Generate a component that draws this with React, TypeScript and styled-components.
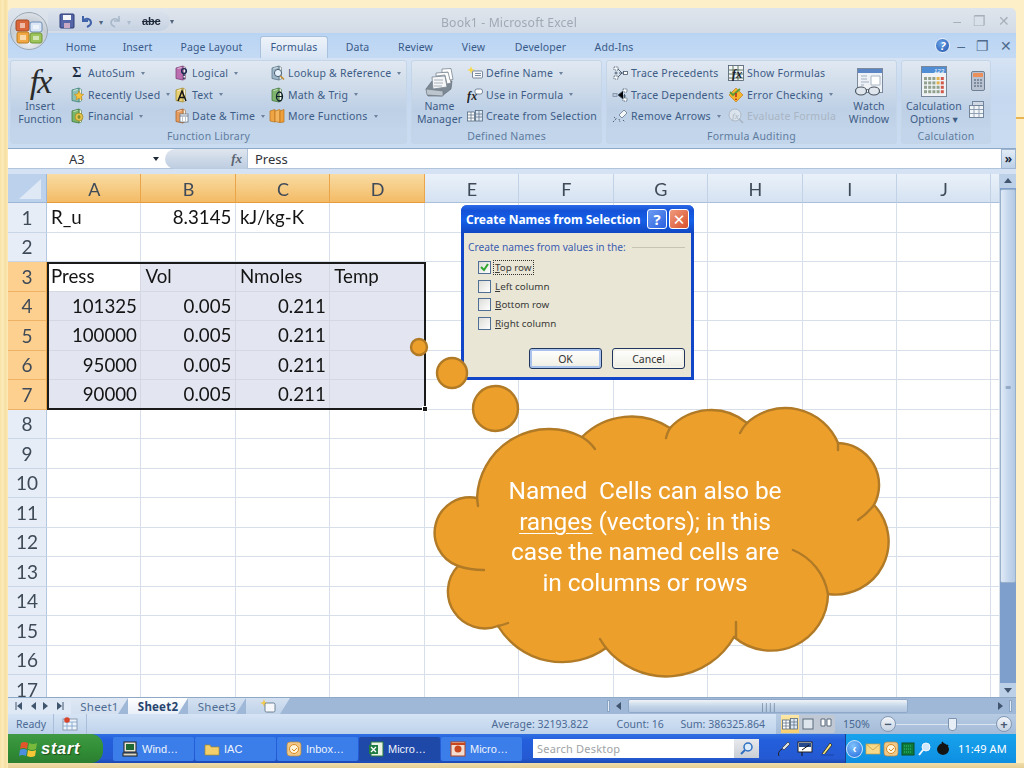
import React from "react";
import styled, { createGlobalStyle } from "styled-components";

const uiFont = `"Noto Sans", "DejaVu Sans", sans-serif`;
const cellFont = `Lato, "Open Sans", sans-serif`;

const GlobalStyle = createGlobalStyle`
  html, body { margin: 0; padding: 0; background: #fdf0c8; }
  * { box-sizing: border-box; }
`;

const Page = styled.div`
  position: relative;
  width: 1024px;
  height: 768px;
  overflow: hidden;
  padding: 8px 8px 5px 8px;
  background:
    linear-gradient(90deg, #f8e3a6 0, #fcecbd 3px, #f6dfa0 5px, #fbe9b8 8px, transparent 8px),
    linear-gradient(0deg, #e6cf94 0, #f0dcaa 5px, transparent 5px),
    linear-gradient(#e8b552, #e8b552) right 117px / 8px 2px no-repeat,
    #fdf0c8;
`;

const Window = styled.div`
  height: 755px;
  display: flex;
  flex-direction: column;
  font-family: ${uiFont};
  filter: blur(0.35px);
`;

/* title bar */
const TitleBar = styled.div`
  height: 25px;
  display: flex;
  align-items: center;
  position: relative;
  padding-left: 40px;
  border-radius: 5px 5px 0 0;
  background: linear-gradient(#dfe5ec, #d2dbe7);
`;
const Qat = styled.div`
  width: 122px;
  height: 20px;
  margin-top: 1px;
  display: flex;
  align-items: center;
  gap: 5px;
  padding-left: 11px;
  border-radius: 0 10px 10px 0;
  background: linear-gradient(#dbe2ec, #c6d2e2);
`;
const QatCaret = styled.span`
  font-size: 8px;
  color: ${(p: { $off?: boolean }) => (p.$off ? "#aebccd" : "#51647c")};
`;
const TitleText = styled.div`
  position: absolute;
  left: 0;
  right: 0;
  top: 6px;
  padding-right: 6px;
  text-align: center;
  font-size: 12.2px;
  letter-spacing: 0.15px;
  color: #a0a9b5;
`;
const WinControls = styled.div`
  margin-left: auto;
  display: flex;
  align-items: center;
  gap: 12px;
  padding-right: 6px;
`;

const Orb = styled.div`
  position: absolute;
  left: 2px;
  top: 4px;
  width: 38px;
  height: 38px;
  border-radius: 50%;
  z-index: 3;
  display: flex;
  align-items: center;
  justify-content: center;
  border: 1px solid #9aa6b3;
  background: radial-gradient(circle at 50% 75%, #f3f5f7 0, #c5ccd4 55%, #e9edf1 100%);
`;

/* tab row */
const TabRow = styled.div`
  height: 25px;
  display: flex;
  align-items: flex-end;
  padding-left: 42px;
  background: linear-gradient(#b9d4f3, #c4daf4);
`;
const RibbonTab = styled.div<{ $w: number; $active?: boolean }>`
  width: ${(p) => p.$w}px;
  height: ${(p) => (p.$active ? 22 : 25)}px;
  line-height: ${(p) => (p.$active ? 21 : 29)}px;
  text-align: center;
  font-size: 10.5px;
  letter-spacing: 0.1px;
  color: #395a88;
  ${(p) =>
    p.$active &&
    `
    background: linear-gradient(#eef3f9, #d7e4f4);
    border: 1px solid #a9c1dd;
    border-bottom: none;
    border-radius: 3px 3px 0 0;
  `}
`;
const HelpGroup = styled.div`
  margin-left: auto;
  height: 25px;
  display: flex;
  align-items: center;
  gap: 11px;
  padding-right: 4px;
`;

/* ribbon */
const Ribbon = styled.div`
  height: 91px;
  display: flex;
  gap: 4px;
  padding: 2px 0 0 2px;
  border-bottom: 1px solid #8ea8c8;
  background: linear-gradient(#d5e3f4 0, #c5d8ef 45%, #c9dcf1 100%);
`;
const Group = styled.div<{ $w: number }>`
  width: ${(p) => p.$w}px;
  height: 84px;
  display: flex;
  flex-direction: column;
  border-radius: 3px;
  border: 1px solid #c5d5e8;
  background: linear-gradient(#e0e8f2 0, #d0dcea 30%, #bdd0e6 60%, #c6d7eb 100%);
  overflow: hidden;
`;
const GroupBody = styled.div`
  height: 68px;
  display: flex;
`;
const GroupLabel = styled.div`
  height: 15px;
  line-height: 16px;
  text-align: center;
  font-size: 10.5px;
  letter-spacing: 0.2px;
  color: #5f7c9f;
  background: #c2d5eb;
`;
const Col = styled.div<{ $w: number; $pad?: number }>`
  width: ${(p) => p.$w}px;
  flex: none;
  display: flex;
  flex-direction: column;
  padding-top: 1.5px;
  padding-left: ${(p) => p.$pad ?? 0}px;
`;
const Item = styled.div<{ $off?: boolean }>`
  height: 21.5px;
  display: flex;
  align-items: center;
  gap: 3px;
  white-space: nowrap;
  font-size: 10.5px;
  letter-spacing: 0.22px;
  color: ${(p) => (p.$off ? "#a9b5c4" : "#3d5c86")};
`;
const Caret = styled.span`
  margin-left: 3px;
  width: 0;
  height: 0;
  border: 2.5px solid transparent;
  border-top: 3px solid #6d829d;
  border-bottom: none;
`;
const BigButton = styled.div<{ $w: number }>`
  width: ${(p) => p.$w}px;
  flex: none;
  display: flex;
  flex-direction: column;
  align-items: center;
`;
const BigIcon = styled.div`
  height: 39px;
  padding-top: 2px;
  display: flex;
  align-items: center;
  justify-content: center;
`;
const BigText = styled.div`
  text-align: center;
  font-size: 10.5px;
  line-height: 13px;
  letter-spacing: 0.1px;
  color: #3d5c86;
  white-space: nowrap;
`;
const FxMark = styled.span`
  font-family: "Liberation Serif", serif;
  font-style: italic;
  font-weight: 400;
  font-size: 34px;
  line-height: 34px;
  letter-spacing: -2px;
  color: #2b2b2b;
`;
const SigmaMark = styled.span`
  width: 16px;
  text-align: center;
  font-family: "Liberation Serif", serif;
  font-weight: 700;
  font-size: 14px;
  color: #1c2c44;
`;
const Divider = styled.div`
  width: 1px;
  height: 54px;
  margin: 6px 0 0 0;
  background: #a9bdd6;
`;
const SmallIcons = styled.div`
  flex: 1;
  display: flex;
  flex-direction: column;
  align-items: center;
  gap: 10px;
  padding: 10px 0 0 0;
`;

/* formula bar */
const FormulaRow = styled.div`
  height: 25px;
  padding-bottom: 5px;
  background: #d4e2f3;
`;
const FormulaBar = styled.div`
  height: 20px;
  display: flex;
  align-items: center;
  background: #fff;
  border-bottom: 1px solid #b0c4dc;
`;
const NameBox = styled.div`
  width: 157px;
  display: flex;
  align-items: center;
  justify-content: space-between;
  padding: 1px 6px 0 61px;
  font-size: 13px;
  color: #30343a;
`;
const NameCaret = styled.span`
  width: 0;
  height: 0;
  border: 3.5px solid transparent;
  border-top: 4px solid #1f2a38;
  border-bottom: none;
`;
const FxButton = styled.div`
  width: 83px;
  height: 20px;
  display: flex;
  align-items: center;
  justify-content: flex-end;
  padding-right: 5px;
  border-radius: 10px 0 0 10px;
  border-right: 1px solid #b0c4dc;
  background: linear-gradient(#dfe6ef, #bccce0);
  font-family: "Liberation Serif", serif;
  font-style: italic;
  font-weight: 700;
  font-size: 13px;
  color: #5b6370;
`;
const FormulaText = styled.div`
  flex: 1;
  padding: 1px 0 0 7px;
  font-size: 13px;
  color: #30343a;
`;
const ExpandButton = styled.div`
  width: 15px;
  height: 20px;
  text-align: center;
  line-height: 17px;
  font-size: 12px;
  font-weight: 700;
  color: #1d2a3c;
  border: 1px solid #9fb6d3;
  background: linear-gradient(#e3ecf6, #bcd0e8);
`;

/* sheet */
const SheetArea = styled.div`
  height: 523px;
  display: flex;
`;
const Grid = styled.div`
  position: relative;
  flex: 1;
  overflow: hidden;
  display: grid;
  grid-template-columns: 39px repeat(10, 94.45px) 1fr;
  grid-auto-rows: 29.5px;
  grid-template-rows: 29px;
  background: #fff;
  font-family: ${cellFont};
`;
const Corner = styled.div`
  position: relative;
  background: #bcd1ec;
  border-right: 1px solid #9db6d6;
  border-bottom: 1px solid #9db6d6;
  &::after {
    content: "";
    position: absolute;
    left: 11px;
    top: 5px;
    width: 22px;
    height: 20px;
    background: #dfe9f5;
    clip-path: polygon(100% 0, 100% 100%, 0 100%);
  }
`;
const ColHead = styled.div<{ $sel?: boolean }>`
  display: flex;
  align-items: center;
  justify-content: center;
  padding: 2px 0 0 1px;
  font-size: 18px;
  color: #3f4a58;
  border-right: 1px solid ${(p) => (p.$sel ? "#eaa54a" : "#c1d2e6")};
  border-bottom: 1px solid ${(p) => (p.$sel ? "#e79a3c" : "#a9bfda")};
  background: ${(p) =>
    p.$sel ? "linear-gradient(#f9dca3, #f3bb66)" : "linear-gradient(#eaf1f9, #d5e2f2)"};
`;
const RowHead = styled.div<{ $sel?: boolean }>`
  display: flex;
  align-items: center;
  justify-content: center;
  font-size: 19px;
  color: #3f4a58;
  border-right: 1px solid ${(p) => (p.$sel ? "#eaa54a" : "#b5c8df")};
  border-bottom: 1px solid ${(p) => (p.$sel ? "#eeb266" : "#c8d6e8")};
  background: ${(p) => (p.$sel ? "#fdd08f" : "#e6edf6")};
`;
const Cell = styled.div<{ $right?: boolean; $sel?: boolean; $active?: boolean }>`
  display: flex;
  align-items: center;
  justify-content: ${(p) => (p.$right ? "flex-end" : "flex-start")};
  padding: 0 3.5px 0 4px;
  font-size: 18.7px;
  color: #141414;
  white-space: nowrap;
  border-right: 1px solid ${(p) => (p.$sel ? "#d4d8e3" : "#d7dfeb")};
  border-bottom: 1px solid ${(p) => (p.$sel ? "#d4d8e3" : "#d7dfeb")};
  background: ${(p) => (p.$active ? "#fff" : p.$sel ? "#e3e6f1" : "#fff")};
`;
const Selection = styled.div`
  position: absolute;
  left: 39px;
  top: 87.5px;
  width: 378.5px;
  height: 148.5px;
  border: 2px solid #1a1a1a;
  pointer-events: none;
`;
const Handle = styled.span`
  position: absolute;
  right: -4px;
  bottom: -4px;
  width: 6px;
  height: 6px;
  background: #1a1a1a;
  border: 1px solid #fff;
`;
const VScroll = styled.div`
  width: 16px;
  display: flex;
  flex-direction: column;
  background: #7e9fcb;
`;
const ScrollArrow = styled.div`
  height: 14px;
  flex: none;
  display: flex;
  align-items: center;
  justify-content: center;
  background: #bcd0e8;
`;
const VThumb = styled.div`
  height: 394px;
  margin-top: 1px;
  display: flex;
  align-items: center;
  justify-content: center;
  color: #6a84a6;
  font-size: 8px;
  line-height: 3px;
  border: 1px solid #99b0cd;
  border-radius: 2px;
  background: linear-gradient(90deg, #e0eaf6, #c4d6ec 55%, #b4c9e3);
`;
const VRest = styled.div`
  flex: 1;
`;

/* sheet tabs */
const TabBar = styled.div`
  height: 17px;
  display: flex;
  align-items: stretch;
  background: #9fb8d7;
  border-top: 1px solid #8ea8c8;
`;
const NavArrows = styled.div`
  width: 63px;
  display: flex;
  align-items: center;
  justify-content: space-around;
  padding: 0 4px;
  background: #dfe9f5;
`;
const SheetTab = styled.div<{ $w: number; $active?: boolean; $light?: boolean }>`
  width: ${(p) => p.$w}px;
  display: flex;
  align-items: center;
  justify-content: center;
  font-size: 11.5px;
  font-weight: ${(p) => (p.$active ? 700 : 400)};
  letter-spacing: 0.2px;
  color: ${(p) => (p.$active ? "#27436e" : "#4f6c92")};
  clip-path: polygon(0 0, 100% 0, calc(100% - 10px) 100%, 0 100%);
  background: ${(p) =>
    p.$active
      ? "linear-gradient(#fff, #e8eff8)"
      : p.$light
        ? "linear-gradient(#dfe8f4, #d3e0f0)"
        : "linear-gradient(#d4e1f1, #c0d3e9)"};
`;
const TabFill = styled.div`
  flex: 1;
`;
const HScrollBox = styled.div`
  width: 411px;
  display: flex;
  align-items: center;
  gap: 4px;
  padding: 0 4px 0 2px;
`;
const HThumb = styled.div`
  width: 280px;
  height: 14px;
  margin-left: 2px;
  display: flex;
  align-items: center;
  justify-content: center;
  font-size: 8px;
  color: #5f7896;
  letter-spacing: -0.5px;
  border: 1px solid #90a9c8;
  border-radius: 2px;
  background: linear-gradient(#f0f4f9, #c5d5e8 50%, #b0c5de);
`;
const Splitter = styled.div`
  width: 3px;
  height: 12px;
  background: #e3ecf6;
  border: 1px solid #8aa4c4;
`;
const HFill = styled.div`
  flex: 1;
`;

/* status bar */
const StatusBar = styled.div`
  height: 20px;
  display: flex;
  align-items: center;
  font-size: 10.5px;
  color: #4b6a95;
  background: linear-gradient(#d6e4f5, #bdd2eb);
`;
const StatusCell = styled.div<{ $w: number }>`
  width: ${(p) => p.$w}px;
  height: 20px;
  flex: none;
  display: flex;
  align-items: center;
  padding-left: 8px;
  border-right: 1px solid #a9bed8;
`;
const StatusStats = styled.div`
  flex: 1;
  display: flex;
  justify-content: flex-end;
  padding-right: 11px;
  white-space: nowrap;
`;
const StatValue = styled.span<{ $w: number }>`
  display: inline-block;
  width: ${(p) => p.$w}px;
`;
const StatusRight = styled.div`
  width: 240px;
  height: 20px;
  flex: none;
  display: flex;
  align-items: center;
  padding-left: 5px;
  background: linear-gradient(#b7cbe3, #a4bbd8);
`;
const ViewButtons = styled.div`
  display: flex;
  width: 54px;
  height: 18px;
  border-radius: 2px;
  background: #bfc8d3;
`;
const ViewButton = styled.div<{ $on?: boolean }>`
  flex: 1;
  display: flex;
  align-items: center;
  justify-content: center;
  background: ${(p) => (p.$on ? "linear-gradient(#fde8a8, #f9cf6d)" : "none")};
`;
const ZoomText = styled.div`
  width: 37px;
  margin-left: 8px;
  color: #486891;
`;
const ZoomBtn = styled.div`
  width: 16px;
  height: 16px;
  flex: none;
  display: flex;
  align-items: center;
  justify-content: center;
  border-radius: 50%;
  border: 1px solid #8298b4;
  background: linear-gradient(#f3f6fa, #c5d2e2);
  font-size: 13px;
  line-height: 13px;
  font-weight: 700;
  color: #4a5c72;
`;
const ZoomTrack = styled.div`
  width: 100px;
  height: 1px;
  position: relative;
  background: #dbe5f1;
`;
const ZoomThumb = styled.span`
  position: absolute;
  left: 52px;
  top: -6px;
  width: 9px;
  height: 13px;
  background: #e8eef6;
  border: 1px solid #7c93b0;
  border-radius: 1px 1px 4px 4px;
`;

/* taskbar */
const Taskbar = styled.div`
  height: 29px;
  display: flex;
  align-items: center;
  color: #fff;
  font-family: "Liberation Sans", sans-serif;
  background: linear-gradient(#2f6fe2 0, #245fdc 20%, #2459d2 85%, #1c48b0 100%);
`;
const StartButton = styled.div`
  width: 95px;
  height: 29px;
  flex: none;
  display: flex;
  align-items: center;
  gap: 2px;
  padding-left: 11px;
  border-radius: 0 12px 12px 0;
  background: linear-gradient(#3f9a43 0, #328f37 50%, #2b7e30 100%);
`;
const StartText = styled.span`
  font-size: 16.5px;
  font-weight: 700;
  font-style: italic;
  letter-spacing: 0.7px;
  text-shadow: 1px 1px 1px #1c4d1e;
`;
const TaskButtons = styled.div`
  margin-left: 10px;
  display: flex;
  gap: 1px;
`;
const TaskButton = styled.div<{ $active?: boolean }>`
  width: 81px;
  height: 24px;
  flex: none;
  display: flex;
  align-items: center;
  gap: 4px;
  padding-left: 9px;
  font-size: 11px;
  letter-spacing: 0;
  color: #eef3fb;
  border-radius: 2px;
  background: ${(p) => (p.$active ? "#1f49a8" : "#3b7ee9")};
`;
const SearchBox = styled.div`
  width: 201px;
  height: 19px;
  margin-left: 11px;
  flex: none;
  padding: 2px 0 0 4px;
  font-family: ${uiFont};
  font-size: 11px;
  letter-spacing: 0.2px;
  color: #a0a3a6;
  background: #fff;
`;
const SearchGo = styled.div`
  width: 25px;
  height: 19px;
  flex: none;
  display: flex;
  align-items: center;
  justify-content: center;
  background: linear-gradient(#e9eaec, #c9ced6);
`;
const QuickIcons = styled.div`
  margin-left: 16px;
  display: flex;
  align-items: center;
  gap: 6px;
`;
const Tray = styled.div`
  height: 29px;
  margin-left: auto;
  width: 171px;
  flex: none;
  display: flex;
  align-items: center;
  gap: 2px;
  border-left: 1px solid #17408f;
  background: linear-gradient(#18a2ec, #0e8fe2);
`;
const Clock = styled.span`
  margin-left: 5px;
  font-family: ${uiFont};
  font-size: 11px;
  letter-spacing: 0.1px;
  white-space: nowrap;
`;
const TrayBack = styled.div`
  width: 17px;
  height: 18px;
  flex: none;
  border-radius: 50%;
  display: flex;
  align-items: center;
  justify-content: center;
  font-size: 12px;
  font-weight: 700;
  background: radial-gradient(circle at 40% 30%, #7fc3fb, #2369dd);
  border: 1px solid #cfe4fb;
`;

/* dialog */
const Dialog = styled.div`
  position: absolute;
  left: 461px;
  top: 205px;
  width: 233px;
  height: 175px;
  display: flex;
  flex-direction: column;
  border-radius: 6px 6px 0 0;
  border: 3px solid #1146c9;
  border-top: none;
  background: #e9e6d6;
  font-family: ${uiFont};
  z-index: 4;
`;
const DialogTitle = styled.div`
  height: 28px;
  margin: 0 -3px;
  flex: none;
  display: flex;
  align-items: center;
  gap: 2px;
  padding: 0 5px 0 5px;
  border-radius: 6px 6px 0 0;
  color: #fff;
  font-weight: 700;
  font-size: 12px;
  white-space: nowrap;
  background: linear-gradient(#2b6ae8 0, #1452d8 20%, #1560e8 55%, #0f47c3 100%);
`;
const TitleLabel = styled.span`
  flex: 1;
`;
const TitleButton = styled.div<{ $close?: boolean }>`
  width: 20px;
  height: 20px;
  flex: none;
  display: flex;
  align-items: center;
  justify-content: center;
  font-size: 15px;
  font-weight: 700;
  border-radius: 3px;
  border: 1px solid #fff;
  background: ${(p) =>
    p.$close
      ? "linear-gradient(135deg, #f09a7d, #d8512d)"
      : "linear-gradient(135deg, #6d9cf2, #2a5fe0)"};
`;
const DialogBody = styled.div`
  flex: 1;
  display: flex;
  flex-direction: column;
  padding: 7px 6px 8px 4px;
`;
const FrameTitle = styled.div`
  display: flex;
  align-items: center;
  gap: 6px;
  font-size: 10.2px;
  color: #3c5caf;
  white-space: nowrap;
`;
const FrameLine = styled.span`
  flex: 1;
  height: 1px;
  background: #c7c5b2;
`;
const Options = styled.div`
  margin: 7px 0 0 10px;
  display: flex;
  flex-direction: column;
  gap: 5.6px;
`;
const Option = styled.div`
  height: 13px;
  display: flex;
  align-items: center;
  gap: 2px;
  font-size: 9.8px;
  color: #3a3a38;
`;
const Check = styled.span`
  width: 13px;
  height: 13px;
  flex: none;
  display: flex;
  align-items: center;
  justify-content: center;
  background: linear-gradient(135deg, #dcdcd7, #fff);
  border: 1px solid #4f6f94;
`;
const OptionLabel = styled.span<{ $focus?: boolean }>`
  padding: 0 1px;
  border: 1px dotted ${(p) => (p.$focus ? "#333" : "transparent")};
`;
const DialogButtons = styled.div`
  margin-top: auto;
  display: flex;
  justify-content: flex-end;
  gap: 10px;
`;
const DialogButton = styled.div<{ $def?: boolean }>`
  width: 73px;
  height: 21px;
  display: flex;
  align-items: center;
  justify-content: center;
  font-size: 10.5px;
  color: #333;
  border-radius: 3px;
  border: 1px solid #20365f;
  background: linear-gradient(#fff, #f2f1e8 85%, #dcd8c6);
  box-shadow: inset 0 0 0 2px ${(p) => (p.$def ? "#a9c3ec" : "#f4f3ea")};
`;

/* callout */
const CalloutArt = styled.svg`
  position: absolute;
  left: 0;
  top: 0;
  z-index: 5;
`;
const CalloutText = styled.div`
  position: absolute;
  left: 445px;
  top: 476px;
  width: 400px;
  z-index: 6;
  text-align: center;
  font-family: Roboto, "Liberation Sans", sans-serif;
  font-size: 24.5px;
  line-height: 30.7px;
  letter-spacing: -0.1px;
  color: #fff;
  white-space: pre;
`;
const Under = styled.span`
  text-decoration: underline;
  text-decoration-thickness: 1px;
  text-underline-offset: 3px;
`;

/* icons */
const Svg = ({ s = 16, w, h, children }: { s?: number; w?: number; h?: number; children: React.ReactNode }) => (
  <svg width={w ?? s} height={h ?? s} viewBox={`0 0 ${w ?? s} ${h ?? s}`} style={{ flex: "none" }}>
    {children}
  </svg>
);

const Book = ({ c, d, children }: { c: string; d: string; children?: React.ReactNode }) => (
  <Svg>
    <path d="M10 1l2.5 1.5V14L10 15z" fill="#f3f3ea" stroke={d} strokeWidth=".6" />
    <path d="M3 3l7-2v14l-7-1.5z" fill={c} stroke={d} strokeWidth=".8" />
    <path d="M4.5 3.5l4-1" stroke="#fff" strokeOpacity=".6" />
    {children}
  </Svg>
);

const ICONS: Record<string, React.ReactNode> = {
  recent: (
    <Book c="#8cc0b2" d="#3f7f72">
      <path d="M10 4l1.5 3 3.3.4-2.4 2.2.7 3.3-3.1-1.7-2.9 1.7.6-3.3L5.3 7.4 8.6 7z" fill="#f6c33a" stroke="#b97f14" strokeWidth=".5" />
    </Book>
  ),
  financial: (
    <Book c="#79b56b" d="#40783a">
      <circle cx="10" cy="9" r="4" fill="#e2c24a" stroke="#8d7a1d" strokeWidth=".6" />
      <path d="M8.500 9h3M10 7v4" stroke="#5f7d22" />
    </Book>
  ),
  logical: (
    <Book c="#bb6fb0" d="#7c3f77">
      <circle cx="11" cy="6" r="2.400" fill="none" stroke="#1b2a52" strokeWidth="1.400" />
      <path d="M11 8.500v2.500M11 12.500v1.500" stroke="#1b2a52" strokeWidth="1.500" />
    </Book>
  ),
  text: (
    <Book c="#e8d176" d="#a88e2a">
      <path d="M5 14l4-10 4 10M6.500 10.500h5" fill="none" stroke="#151515" strokeWidth="1.500" />
    </Book>
  ),
  date: (
    <Book c="#e79b5c" d="#a9642d">
      <rect x="7" y="6" width="8" height="8" fill="#fff" stroke="#5a6b80" strokeWidth=".7" />
      <path d="M7 8h8M9 10h1M12 10h1M9 12h1M12 12h1" stroke="#5a6b80" strokeWidth=".8" />
    </Book>
  ),
  lookup: (
    <Book c="#9fb7c8" d="#5b7688">
      <circle cx="9" cy="8" r="3.600" fill="#e5f2fb" stroke="#4b5d70" />
      <path d="M11.500 11l3.500 3.500" stroke="#c68a2b" strokeWidth="1.600" />
    </Book>
  ),
  math: (
    <Book c="#7fb46f" d="#44793a">
      <ellipse cx="10.500" cy="9.500" rx="3" ry="4.500" fill="none" stroke="#12202e" strokeWidth="1.300" />
      <path d="M8 9.500h5" stroke="#12202e" />
    </Book>
  ),
  more: (
    <Svg>
      <path d="M1 3l5-1.500V14l-5-1z" fill="#f0a545" stroke="#b8711a" strokeWidth=".7" />
      <path d="M6 3l5-1.500V14.500l-5-1z" fill="#f3b45c" stroke="#b8711a" strokeWidth=".7" />
      <path d="M11 3l4-1.500V14l-4 .5z" fill="#efa03a" stroke="#b8711a" strokeWidth=".7" />
    </Svg>
  ),
  define: (
    <Svg>
      <path d="M4 1l1 3 3 1-3 1-1 3-1-3-3-1 3-1z" fill="#f4d84a" />
      <rect x="5.500" y="6" width="10" height="7" rx="1" fill="#f5f7fa" stroke="#5c7085" strokeWidth=".8" />
      <path d="M8 8.500h6M8 10.500h6" stroke="#5c7085" strokeWidth=".8" />
    </Svg>
  ),
  use: (
    <Svg>
      <text x="0" y="13" fontFamily="Liberation Serif" fontStyle="italic" fontWeight="700" fontSize="12" fill="#222">fx</text>
      <rect x="8" y="2" width="7.500" height="5" rx="2" fill="#fff" stroke="#5c7085" strokeWidth=".8" />
    </Svg>
  ),
  create: (
    <Svg>
      <rect x=".5" y="4" width="7" height="9" fill="#fff" stroke="#53697f" strokeWidth=".8" />
      <rect x="8.500" y="2.500" width="7" height="10.500" fill="#dfe9f3" stroke="#53697f" strokeWidth=".8" />
      <path d="M1 7h6M1 10h6M9 6h6M9 9h6M12 3v10M4 4v9" stroke="#53697f" strokeWidth=".7" />
    </Svg>
  ),
  precedents: (
    <Svg>
      <path d="M2 2h4v3H2zM2 11h4v3H2z" fill="#fff" stroke="#44566a" strokeWidth=".8" strokeDasharray="1.400 .8" />
      <path d="M6 4l4 4M6 12l4-4M7 8h5M4 6.500v3M2.500 8h3" stroke="#44566a" strokeWidth=".9" />
      <rect x="11.500" y="6.500" width="4" height="3" fill="#fff" stroke="#44566a" strokeWidth=".8" />
    </Svg>
  ),
  dependents: (
    <Svg>
      <path d="M11 2h4v3h-4zM11 11h4v3h-4z" fill="#fff" stroke="#44566a" strokeWidth=".8" strokeDasharray="1.400 .8" />
      <path d="M11 4L6 8l5 4M12.500 7v4M11 9h3" stroke="#44566a" strokeWidth=".9" />
      <rect x="1" y="6.500" width="4" height="3" fill="#bccadb" stroke="#7a8ea4" strokeWidth=".8" />
    </Svg>
  ),
  remove: (
    <Svg>
      <path d="M7 7l5-5 3 3-5 5z" fill="#f5f6f8" stroke="#65788e" strokeWidth=".8" />
      <path d="M1 14l4-4M7 11l1 3M2 9l2 2M11 12l2 2" stroke="#44566a" strokeWidth=".9" strokeDasharray="1.500 1" />
    </Svg>
  ),
  show: (
    <Svg>
      <rect x=".5" y=".5" width="15" height="15" fill="#f3f5f6" stroke="#4a5a6a" strokeWidth=".8" />
      <path d="M1 5h14M1 9h14M1 13h14M5 1v14M10 1v14" stroke="#4f6a50" strokeWidth=".9" />
      <text x="4" y="13" fontFamily="Liberation Serif" fontStyle="italic" fontWeight="700" fontSize="12" fill="#16202c">fx</text>
    </Svg>
  ),
  error: (
    <Svg>
      <path d="M8 1l7 7-7 7-7-7z" fill="#f5b52d" stroke="#c5801a" strokeWidth=".7" />
      <path d="M2 5l3 3 7-6" fill="none" stroke="#5a9a3a" strokeWidth="1.800" />
      <path d="M8 6v4M8 11.500v1.500" stroke="#c22e1c" strokeWidth="1.600" />
    </Svg>
  ),
  evaluate: (
    <Svg>
      <circle cx="7" cy="7" r="6" fill="#dbe3ec" stroke="#a9b5c3" strokeWidth=".9" />
      <path d="M11 11l4 4" stroke="#a9b5c3" strokeWidth="1.600" />
      <text x="4" y="10.500" fontFamily="Liberation Serif" fontStyle="italic" fontSize="9" fill="#a9b5c3">fx</text>
    </Svg>
  ),
  macro: (
    <Svg>
      <rect x="1" y="3" width="14" height="11" fill="#eef3f9" stroke="#7a8da3" strokeWidth=".8" />
      <path d="M1 6h14M5 6v8M10 6v8M1 10h14" stroke="#7aa0cc" strokeWidth=".8" />
      <circle cx="5" cy="4" r="2.800" fill="#d8442a" />
    </Svg>
  ),
  newTab: (
    <Svg>
      <path d="M4 1l1 3 3 1-3 1-1 3-1-3-3-1 3-1z" fill="#f4c84a" />
      <rect x="5" y="5" width="10" height="9" rx="1.500" fill="#f5f7fa" stroke="#53697f" strokeWidth=".8" />
    </Svg>
  ),
};

const Ic = ({ n }: { n: string }) => <>{ICONS[n]}</>;

const NameManagerIcon = () => (
  <Svg w={32} h={30}>
    <path d="M2 22l6-8h20l-1 8-9 7H4z" fill="#7d8a96" stroke="#59636e" strokeWidth=".6" />
    <path d="M2 22l17 2v5L3 28z" fill="#bcc5ce" stroke="#6b7680" strokeWidth=".6" />
    <path d="M8 10l13-1 2 11-14 2z" fill="#f5f6f8" stroke="#7b8691" strokeWidth=".8" />
    <path d="M12 6l13-1 2 11-4 1-2-9-9 1z" fill="#fdfdfd" stroke="#7b8691" strokeWidth=".8" />
    <path d="M18 2l9-.5 2 11-3 .5-2-8-6 .5z" fill="#fff" stroke="#7b8691" strokeWidth=".8" />
    <path d="M10 13h9M10 16h9M10 19h8" stroke="#94a0ab" strokeWidth=".8" />
  </Svg>
);

const WatchIcon = () => (
  <Svg w={30} h={30}>
    <rect x="3.500" y="1.500" width="25" height="24" fill="#eef2f7" stroke="#7b8b9d" />
    <rect x="4" y="2" width="24" height="4" fill="#5b85c4" />
    <path d="M7 9h6M7 12h6M7 15h8M7 18h3" stroke="#9faebf" />
    <path d="M17 9h9v9h-9z" fill="#fff" stroke="#a8b4c2" />
    <ellipse cx="7" cy="24" rx="5.500" ry="4" fill="#dfe6ee" stroke="#4c5560" strokeWidth="1.200" />
    <ellipse cx="20" cy="24" rx="5.500" ry="4" fill="#dfe6ee" stroke="#4c5560" strokeWidth="1.200" />
    <path d="M12 23q1.500-1 3 0" fill="none" stroke="#4c5560" />
  </Svg>
);

const CalcKeys = [0, 1, 2, 3].flatMap((r) => [0, 1, 2, 3, 4].map((c) => ({ r, c })));
const CalcIcon = () => (
  <Svg w={26} h={31}>
    <rect x=".5" y=".5" width="25" height="30" fill="#f0f3f6" stroke="#788899" />
    <rect x="1" y="1" width="24" height="6" fill="#4f8ed4" />
    <text x="13" y="6.500" fontFamily="Liberation Sans" fontStyle="italic" fontSize="6" fill="#fff">123</text>
    {CalcKeys.map(({ r, c }) => (
      <rect
        key={`${r}-${c}`}
        x={3 + c * 4.2}
        y={11 + r * 4.4}
        width="3"
        height="3"
        fill={c === 4 ? "#d1584a" : c === 3 && r < 2 ? "#e2b34b" : "#92a28f"}
      />
    ))}
  </Svg>
);
const MiniCalc = () => (
  <Svg w={14} h={20}>
    <rect x=".5" y=".5" width="13" height="19" rx="1.500" fill="#b8c2d0" stroke="#6f7f94" />
    <rect x="2" y="2" width="10" height="4" fill="#eb8f5c" />
    <path d="M3 9h2M6 9h2M9 9h2M3 12h2M6 12h2M9 12h2M3 15h2M6 15h2M9 15h2" stroke="#46566b" />
  </Svg>
);
const MiniSheet = () => (
  <Svg w={18} h={18}>
    <rect x="3.500" y=".5" width="11" height="12" fill="#cfd8e4" stroke="#72859b" />
    <rect x=".5" y="4.500" width="14" height="12" fill="#f2f5f8" stroke="#72859b" />
    <path d="M1 8.500h13M1 12.500h13M5 5v11M10 5v11" stroke="#8fa0b4" />
  </Svg>
);

const OrbMark = () => (
  <Svg s={28}>
    <rect x="1" y="3" width="13" height="11" rx="2" fill="#d9663a" stroke="#a44a25" />
    <rect x="15" y="5" width="12" height="10" rx="2" fill="#dbe7f6" stroke="#6d8db8" />
    <rect x="2" y="15" width="12" height="11" rx="2" fill="#f1a844" stroke="#bb7a1f" />
    <rect x="15" y="16" width="12" height="10" rx="2" fill="#9dc35b" stroke="#6f9637" />
    <path d="M5 6h5v5H5zM18 8h6v4h-6zM5 18h6v5H5zM18 19h6v4h-6z" fill="#fff" fillOpacity=".55" />
  </Svg>
);

const SaveIcon = () => (
  <Svg>
    <rect x="1" y="1" width="14" height="14" rx="1" fill="#5566a8" stroke="#2e3c76" />
    <rect x="4" y="2" width="8" height="5" fill="#f4f6fa" />
    <rect x="5" y="10" width="6" height="5" fill="#c9a8c4" />
  </Svg>
);
const UndoIcon = ({ c }: { c: string }) => (
  <Svg s={14}>
    <path d="M3 2v5h5M3 7c3-4 8-2 8 2 0 2-2 3-4 4" fill="none" stroke={c} strokeWidth="2" />
  </Svg>
);
const RedoIcon = ({ c }: { c: string }) => (
  <Svg s={14}>
    <path d="M11 2v5H6M11 7C8 3 3 5 3 9c0 2 2 3 4 4" fill="none" stroke={c} strokeWidth="1.600" />
  </Svg>
);
const SpellIcon = styled.span`
  font-family: "Liberation Sans", sans-serif;
  font-size: 11px;
  font-weight: 700;
  color: #1f2a3a;
  text-decoration: line-through;
  letter-spacing: -0.2px;
  margin-left: 6px;
`;
const WinGlyph = styled.span<{ $c: string }>`
  font-size: 14px;
  line-height: 14px;
  font-family: "Liberation Sans", sans-serif;
  color: ${(p) => p.$c};
`;
const HelpCircle = styled.div`
  width: 15px;
  height: 15px;
  margin-right: -4px;
  border-radius: 50%;
  display: flex;
  align-items: center;
  justify-content: center;
  font-size: 11px;
  font-weight: 700;
  font-style: italic;
  color: #fff;
  background: radial-gradient(circle at 40% 35%, #6aa3e8, #1e4fa8);
  border: 1px solid #e8f0fa;
`;

const arrowPaths = { l: "M7 1v8L2 5z", r: "M1 1v8l5-4z", u: "M0 7h8L4 2z", d: "M0 3h8L4 8z" };
const Triangle = ({ dir, bar }: { dir: "l" | "r" | "u" | "d"; bar?: boolean }) => (
  <Svg w={8} h={10}>
    <path d={arrowPaths[dir]} fill="#40566f" />
    {bar && <path d={dir === "l" ? "M1 1v8" : "M7 1v8"} stroke="#40566f" />}
  </Svg>
);

const WinFlag = () => (
  <Svg s={20}>
    <path d="M2 4q3-2 7 0l-1 6q-4-2-7 0z" fill="#e4552b" />
    <path d="M10 4q4 2 8 0l-1 6q-4 2-8 0z" fill="#79b93c" />
    <path d="M1 11q3-2 7 0l-1 6q-4-2-7 0z" fill="#4c8fe0" />
    <path d="M9 11q4 2 8 0l-1 6q-4 2-8 0z" fill="#f6c636" />
  </Svg>
);

const TaskIcon = ({ n }: { n: string }) => {
  if (n === "term")
    return (
      <Svg>
        <rect x="2" y="1" width="12" height="10" fill="#e6e4d8" stroke="#222" />
        <rect x="4" y="3" width="8" height="6" fill="#1f6a32" />
        <rect x="1" y="12" width="14" height="3" fill="#d8d6c8" stroke="#222" />
      </Svg>
    );
  if (n === "folder")
    return (
      <Svg>
        <path d="M1 4h5l1 2h8v8H1z" fill="#f3cf6c" stroke="#a88a2d" strokeWidth=".7" />
      </Svg>
    );
  if (n === "inbox")
    return (
      <Svg>
        <rect x="1" y="1" width="14" height="14" rx="3" fill="#f0c98a" stroke="#b9863e" strokeWidth=".7" />
        <circle cx="8" cy="8" r="4.500" fill="#fff4dc" stroke="#d98b1f" />
        <path d="M6 8l2 2 3-3" stroke="#d98b1f" fill="none" />
      </Svg>
    );
  if (n === "excel")
    return (
      <Svg>
        <rect x="3" y="1" width="12" height="14" fill="#e9f3e6" stroke="#2b7a3f" />
        <rect x="1" y="4" width="9" height="9" fill="#1f7d42" />
        <path d="M3 6l5 5M8 6l-5 5" stroke="#fff" strokeWidth="1.300" />
      </Svg>
    );
  return (
    <Svg>
      <rect x="1" y="1" width="14" height="14" fill="#f3ddd3" stroke="#b1431f" />
      <circle cx="8" cy="8" r="3.500" fill="#c9471e" />
      <path d="M1 2h14v2H1z" fill="#c9471e" />
    </Svg>
  );
};

const functionColumns = [
  {
    w: 104,
    items: [
      { sigma: true, t: "AutoSum", c: true },
      { i: "recent", t: "Recently Used", c: true },
      { i: "financial", t: "Financial", c: true },
    ],
  },
  {
    w: 96,
    items: [
      { i: "logical", t: "Logical", c: true },
      { i: "text", t: "Text", c: true },
      { i: "date", t: "Date & Time", c: true },
    ],
  },
  {
    w: 139,
    items: [
      { i: "lookup", t: "Lookup & Reference", c: true },
      { i: "math", t: "Math & Trig", c: true },
      { i: "more", t: "More Functions", c: true },
    ],
  },
];

type RibbonItem = { i?: string; t: string; c?: boolean; sigma?: boolean; off?: boolean };

const ItemList = ({ items }: { items: RibbonItem[] }) => (
  <>
    {items.map((it) => (
      <Item key={it.t} $off={it.off}>
        {it.sigma ? <SigmaMark>Σ</SigmaMark> : <Ic n={it.i as string} />}
        {it.t}
        {it.c && <Caret />}
      </Item>
    ))}
  </>
);

const colLetters = ["A", "B", "C", "D", "E", "F", "G", "H", "I", "J", ""];
const sheetRows: Record<number, string[]> = {
  1: ["R_u", "8.3145", "kJ/kg-K", ""],
  3: ["Press", "Vol", "Nmoles", "Temp"],
  4: ["101325", "0.005", "0.211", ""],
  5: ["100000", "0.005", "0.211", ""],
  6: ["95000", "0.005", "0.211", ""],
  7: ["90000", "0.005", "0.211", ""],
};
const isNum = (v: string) => /^[\d.]+$/.test(v);
const rows = Array.from({ length: 17 }, (_, i) => i + 1);

const Sheet = () => (
  <Grid>
    <Corner />
    {colLetters.map((c, i) => (
      <ColHead key={i} $sel={i < 4}>
        {c}
      </ColHead>
    ))}
    {rows.map((r) => (
      <React.Fragment key={r}>
        <RowHead $sel={r >= 3 && r <= 7}>{r}</RowHead>
        {colLetters.map((_, c) => {
          const v = sheetRows[r]?.[c] ?? "";
          const sel = r >= 3 && r <= 7 && c < 4;
          return (
            <Cell key={c} $right={isNum(v)} $sel={sel} $active={r === 3 && c === 0}>
              {v}
            </Cell>
          );
        })}
      </React.Fragment>
    ))}
    <Selection>
      <Handle />
    </Selection>
  </Grid>
);

const Cloud = () => (
  <CalloutArt width={1024} height={768} viewBox="0 0 1024 768">
    <g fill="#ed9f2c" stroke="#b07a26" strokeWidth="2.400">
      <circle cx="419" cy="347" r="8" />
      <circle cx="452" cy="373" r="15" />
      <circle cx="495.500" cy="408.500" r="22.500" />
      <path d="M477 498A72 72 0 0 1 582 437A70 70 0 0 1 670 428A56 56 0 0 1 747 423A57 57 0 0 1 838 443A42 42 0 0 1 874 505A53 53 0 0 1 828 594A57 57 0 0 1 734 637A78 78 0 0 1 606 648A75 75 0 0 1 498 626A37 37 0 0 1 458 566A35.400 35.400 0 0 1 477 498Z" />
      <path
        fill="none"
        strokeLinecap="round"
        d="M582 437Q590 442 595 449M670 428Q667 433 666 438M747 423Q743 427 740 433M838 443V450M874 505Q868 513 858 520M828 594A58 58 0 0 0 793 550M736 622V637M606 648Q603 644 600 639M498 626Q503 625 508 623M458 566Q470 570 484 570M477 498L478 506"
      />
    </g>
  </CalloutArt>
);

const App = () => (
  <Page>
    <GlobalStyle />
    <Window>
      <TitleBar>
        <Orb>
          <OrbMark />
        </Orb>
        <Qat>
          <SaveIcon />
          <UndoIcon c="#3f62a8" />
          <QatCaret>▾</QatCaret>
          <RedoIcon c="#a9b8c8" />
          <QatCaret $off>▾</QatCaret>
          <SpellIcon>abc</SpellIcon>
        </Qat>
        <QatCaret>▾</QatCaret>
        <TitleText>Book1 - Microsoft Excel</TitleText>
        <WinControls>
          <WinGlyph $c="#a7afba">–</WinGlyph>
          <WinGlyph $c="#a7afba">❐</WinGlyph>
          <WinGlyph $c="#a7afba">✕</WinGlyph>
        </WinControls>
      </TitleBar>
      <TabRow>
        <RibbonTab $w={62}>Home</RibbonTab>
        <RibbonTab $w={51}>Insert</RibbonTab>
        <RibbonTab $w={97}>Page Layout</RibbonTab>
        <RibbonTab $w={68} $active>
          Formulas
        </RibbonTab>
        <RibbonTab $w={59}>Data</RibbonTab>
        <RibbonTab $w={57}>Review</RibbonTab>
        <RibbonTab $w={59}>View</RibbonTab>
        <RibbonTab $w={75}>Developer</RibbonTab>
        <RibbonTab $w={72}>Add-Ins</RibbonTab>
        <HelpGroup>
          <HelpCircle>?</HelpCircle>
          <WinGlyph $c="#4f6a8c">–</WinGlyph>
          <WinGlyph $c="#4f6a8c">❐</WinGlyph>
          <WinGlyph $c="#4f6a8c">✕</WinGlyph>
        </HelpGroup>
      </TabRow>
      <Ribbon>
        <Group $w={397}>
          <GroupBody>
            <BigButton $w={58}>
              <BigIcon>
                <FxMark>fx</FxMark>
              </BigIcon>
              <BigText>
                Insert
                <br />
                Function
              </BigText>
            </BigButton>
            {functionColumns.map((col) => (
              <Col key={col.w} $w={col.w}>
                <ItemList items={col.items} />
              </Col>
            ))}
          </GroupBody>
          <GroupLabel>Function Library</GroupLabel>
        </Group>
        <Group $w={191}>
          <GroupBody>
            <BigButton $w={55}>
              <BigIcon>
                <NameManagerIcon />
              </BigIcon>
              <BigText>
                Name
                <br />
                Manager
              </BigText>
            </BigButton>
            <Col $w={135}>
              <ItemList
                items={[
                  { i: "define", t: "Define Name", c: true },
                  { i: "use", t: "Use in Formula", c: true },
                  { i: "create", t: "Create from Selection" },
                ]}
              />
            </Col>
          </GroupBody>
          <GroupLabel>Defined Names</GroupLabel>
        </Group>
        <Group $w={291}>
          <GroupBody>
            <Col $w={121} $pad={5}>
              <ItemList
                items={[
                  { i: "precedents", t: "Trace Precedents" },
                  { i: "dependents", t: "Trace Dependents" },
                  { i: "remove", t: "Remove Arrows", c: true },
                ]}
              />
            </Col>
            <Col $w={114}>
              <ItemList
                items={[
                  { i: "show", t: "Show Formulas" },
                  { i: "error", t: "Error Checking", c: true },
                  { i: "evaluate", t: "Evaluate Formula", off: true },
                ]}
              />
            </Col>
            <Divider />
            <BigButton $w={54}>
              <BigIcon>
                <WatchIcon />
              </BigIcon>
              <BigText>
                Watch
                <br />
                Window
              </BigText>
            </BigButton>
          </GroupBody>
          <GroupLabel>Formula Auditing</GroupLabel>
        </Group>
        <Group $w={90}>
          <GroupBody>
            <BigButton $w={64}>
              <BigIcon>
                <CalcIcon />
              </BigIcon>
              <BigText>
                Calculation
                <br />
                Options ▾
              </BigText>
            </BigButton>
            <SmallIcons>
              <MiniCalc />
              <MiniSheet />
            </SmallIcons>
          </GroupBody>
          <GroupLabel>Calculation</GroupLabel>
        </Group>
      </Ribbon>
      <FormulaRow>
        <FormulaBar>
          <NameBox>
            A3
            <NameCaret />
          </NameBox>
          <FxButton>fx</FxButton>
          <FormulaText>Press</FormulaText>
          <ExpandButton>»</ExpandButton>
        </FormulaBar>
      </FormulaRow>
      <SheetArea>
        <Sheet />
        <VScroll>
          <ScrollArrow>
            <Triangle dir="u" />
          </ScrollArrow>
          <VThumb>≡</VThumb>
          <VRest />
          <ScrollArrow>
            <Triangle dir="d" />
          </ScrollArrow>
        </VScroll>
      </SheetArea>
      <TabBar>
        <NavArrows>
          <Triangle dir="l" bar />
          <Triangle dir="l" />
          <Triangle dir="r" />
          <Triangle dir="r" bar />
        </NavArrows>
        <SheetTab $w={57} $light>
          Sheet1
        </SheetTab>
        <SheetTab $w={60} $active>
          Sheet2
        </SheetTab>
        <SheetTab $w={58}>Sheet3</SheetTab>
        <SheetTab $w={44}>
          <Ic n="newTab" />
        </SheetTab>
        <TabFill />
        <HScrollBox>
          <Splitter />
          <Triangle dir="l" />
          <HThumb>||||</HThumb>
          <HFill />
          <Triangle dir="r" />
          <Splitter />
        </HScrollBox>
      </TabBar>
      <StatusBar>
        <StatusCell $w={46}>Ready</StatusCell>
        <StatusCell $w={33}>
          <Ic n="macro" />
        </StatusCell>
        <StatusStats>
          <StatValue $w={125}>Average: 32193.822</StatValue>
          <StatValue $w={64}>Count: 16</StatValue>
          <span>Sum: 386325.864</span>
        </StatusStats>
        <StatusRight>
          <ViewButtons>
            <ViewButton $on>
              <Ic n="create" />
            </ViewButton>
            <ViewButton>
              <Svg s={12}>
                <rect x="1" y="1" width="10" height="10" fill="#dfe5ec" stroke="#5a6a7c" />
              </Svg>
            </ViewButton>
            <ViewButton>
              <Svg s={12}>
                <path d="M1 1h4v7H1zM7 1h4v7H7z" fill="#fff" stroke="#5a6a7c" />
              </Svg>
            </ViewButton>
          </ViewButtons>
          <ZoomText>150%</ZoomText>
          <ZoomBtn>−</ZoomBtn>
          <ZoomTrack>
            <ZoomThumb />
          </ZoomTrack>
          <ZoomBtn>+</ZoomBtn>
        </StatusRight>
      </StatusBar>
      <Taskbar>
        <StartButton>
          <WinFlag />
          <StartText>start</StartText>
        </StartButton>
        <TaskButtons>
          <TaskButton>
            <TaskIcon n="term" />
            Wind…
          </TaskButton>
          <TaskButton>
            <TaskIcon n="folder" />
            IAC
          </TaskButton>
          <TaskButton>
            <TaskIcon n="inbox" />
            Inbox…
          </TaskButton>
          <TaskButton $active>
            <TaskIcon n="excel" />
            Micro…
          </TaskButton>
          <TaskButton>
            <TaskIcon n="ppt" />
            Micro…
          </TaskButton>
        </TaskButtons>
        <SearchBox>Search Desktop</SearchBox>
        <SearchGo>
          <Svg s={15}>
            <circle cx="9" cy="6" r="4" fill="#dcecfa" stroke="#2f6fc2" strokeWidth="1.500" />
            <path d="M6 9l-4 4" stroke="#2f6fc2" strokeWidth="2" />
          </Svg>
        </SearchGo>
        <QuickIcons>
          <Svg>
            <path d="M13 1l2 2-6 6-2-2z" fill="#d8dde3" stroke="#333" strokeWidth=".7" />
            <path d="M7 8q-5 3-3 7" fill="none" stroke="#222" />
          </Svg>
          <Svg>
            <rect x="1" y="1" width="14" height="10" fill="#fff" stroke="#222" />
            <rect x="2" y="2" width="12" height="4" fill="#244a8c" />
            <path d="M5 11v4M5 9l7-5" stroke="#111" />
          </Svg>
          <Svg>
            <path d="M3 13L11 2l2 2-8 10z" fill="#f6e27a" stroke="#222" strokeWidth=".8" />
            <path d="M2 14h13" stroke="#1e4fc0" strokeWidth="2" />
          </Svg>
        </QuickIcons>
        <Tray>
          <TrayBack>‹</TrayBack>
          <Svg>
            <rect x="1" y="3" width="14" height="10" fill="#f7d98a" stroke="#c9a043" strokeWidth=".7" />
            <path d="M1 3l7 6 7-6" fill="none" stroke="#c9a043" strokeWidth=".8" />
          </Svg>
          <TaskIcon n="inbox" />
          <Svg s={14}>
            <rect x="1" y="1" width="12" height="12" fill="#0e7a3a" stroke="#0a4f25" />
            <path d="M3 4h8M3 7h8M3 10h8" stroke="#34c46a" strokeDasharray="1 1" />
          </Svg>
          <Svg>
            <circle cx="9" cy="6" r="4" fill="#cfe6fb" stroke="#f1f6fc" />
            <path d="M6 9l-4 5" stroke="#f1f6fc" strokeWidth="2" />
          </Svg>
          <Svg>
            <path d="M8 2q5 1 6 6 0 5-6 6Q2 13 2 8q1-5 6-6z" fill="#141414" />
            <path d="M7 1l2 3M13 4l-2 2" stroke="#141414" strokeWidth="1.500" />
          </Svg>
          <Clock>11:49 AM</Clock>
        </Tray>
      </Taskbar>
    </Window>
    <Dialog>
      <DialogTitle>
        <TitleLabel>Create Names from Selection</TitleLabel>
        <TitleButton>?</TitleButton>
        <TitleButton $close>✕</TitleButton>
      </DialogTitle>
      <DialogBody>
        <FrameTitle>
          Create names from values in the:
          <FrameLine />
        </FrameTitle>
        <Options>
          <Option>
            <Check>
              <Svg s={11}>
                <path d="M2 5l3 3 4-6" fill="none" stroke="#2fa52f" strokeWidth="2" />
              </Svg>
            </Check>
            <OptionLabel $focus>
              <u>T</u>op row
            </OptionLabel>
          </Option>
          <Option>
            <Check />
            <OptionLabel>
              <u>L</u>eft column
            </OptionLabel>
          </Option>
          <Option>
            <Check />
            <OptionLabel>
              <u>B</u>ottom row
            </OptionLabel>
          </Option>
          <Option>
            <Check />
            <OptionLabel>
              <u>R</u>ight column
            </OptionLabel>
          </Option>
        </Options>
        <DialogButtons>
          <DialogButton $def>OK</DialogButton>
          <DialogButton>Cancel</DialogButton>
        </DialogButtons>
      </DialogBody>
    </Dialog>
    <Cloud />
    <CalloutText>
      {"Named  Cells can also be\n"}
      <Under>ranges</Under>
      {" (vectors); in this\ncase the named cells are\nin columns or rows"}
    </CalloutText>
  </Page>
);

export default App;
